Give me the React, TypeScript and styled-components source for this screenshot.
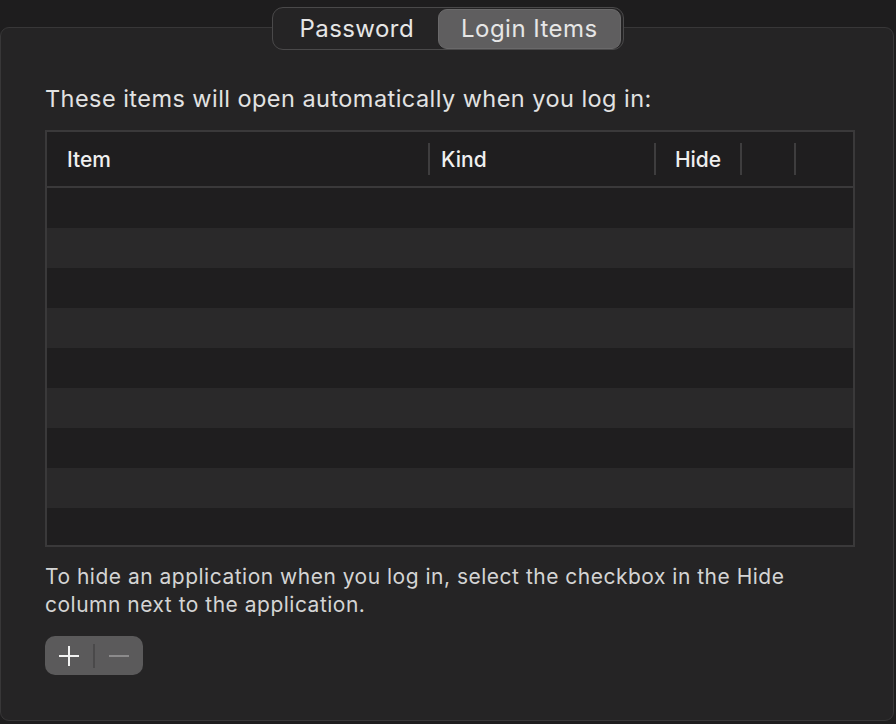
import React from "react";
import styled, { createGlobalStyle } from "styled-components";

const Global = createGlobalStyle`
  html, body { margin: 0; padding: 0; background: #1e1d1e; }
  body { font-family: Inter, "Liberation Sans", sans-serif; -webkit-font-smoothing: antialiased; }
  #root { width: 896px; height: 724px; overflow: hidden; }
`;

const Page = styled.div`
  width: 896px;
  height: 724px;
  padding-top: 7px;
  box-sizing: border-box;
  display: flex;
  flex-direction: column;
  align-items: center;
`;

const Segmented = styled.div`
  position: relative;
  z-index: 2;
  display: flex;
  align-items: center;
  height: 43px;
  box-sizing: border-box;
  padding: 0 2px;
  border: 1px solid #4a494a;
  border-radius: 11px;
  background: #252425;
`;

const Segment = styled.div<{ $active?: boolean }>`
  height: 40px;
  box-sizing: border-box;
  display: flex;
  align-items: center;
  justify-content: center;
  padding: 0 ${(p) => (p.$active ? "22px" : "24px")};
  border-radius: 9px;
  font-size: 24px;
  letter-spacing: 0.45px;
  color: #e6e6e6;
  background: ${(p) => (p.$active ? "#5f5e5f" : "transparent")};
  border: ${(p) => (p.$active ? "1px solid #6a696a" : "none")};
`;

const Panel = styled.div`
  margin-top: -23px;
  width: 894px;
  align-self: flex-start;
  height: 694px;
  box-sizing: border-box;
  border: 1.5px solid #383738;
  border-radius: 9px;
  background: #252425;
  padding: 56px 39px 0 44px;
  display: flex;
  flex-direction: column;
`;

const Lead = styled.div`
  font-size: 23.5px;
  letter-spacing: 0.45px;
  line-height: 30px;
  color: #e2e2e2;
  height: 30px;
  white-space: nowrap;
`;

const Table = styled.div`
  margin-top: 16px;
  width: 810px;
  height: 417px;
  box-sizing: border-box;
  border: 2px solid #3a393a;
  background: #1f1e1f;
  display: flex;
  flex-direction: column;
  overflow: hidden;
`;

const Header = styled.div`
  height: 56px;
  flex: none;
  box-sizing: border-box;
  border-bottom: 2px solid #3a393a;
  display: grid;
  grid-template-columns: 381px 226px 86px 54px 1fr;
  align-items: center;
`;

const HeadCell = styled.div<{ $first?: boolean; $center?: boolean }>`
  height: 32px;
  display: flex;
  align-items: center;
  justify-content: ${(p) => (p.$center ? "center" : "flex-start")};
  box-sizing: border-box;
  padding-left: ${(p) => (p.$first ? "20px" : p.$center ? "0" : "11px")};
  border-left: ${(p) => (p.$first ? "none" : "2px solid #3e3d3e")};
  font-size: 21px;
  font-weight: 500;
  color: #efefef;
`;

const Row = styled.div<{ $alt?: boolean }>`
  height: 40px;
  flex: none;
  background: ${(p) => (p.$alt ? "#2a292a" : "#1f1e1f")};
`;

const Note = styled.div`
  margin-top: 16px;
  font-size: 21px;
  letter-spacing: 0.5px;
  line-height: 28px;
  color: #d4d4d4;
  width: 810px;
`;

const ButtonGroup = styled.div`
  margin-top: 17px;
  width: 98px;
  height: 39px;
  border-radius: 10px;
  background: #5b5a5b;
  display: flex;
  align-items: center;
`;

const IconButton = styled.div`
  width: 49px;
  height: 39px;
  display: flex;
  align-items: center;
  justify-content: center;
`;

const Divider = styled.div`
  width: 1.5px;
  height: 24px;
  background: #4a494a;
`;

export default function App() {
  const rows = Array.from({ length: 9 }, (_, i) => i);
  return (
    <>
      <Global />
      <Page>
        <Segmented>
          <Segment>Password</Segment>
          <Segment $active>Login Items</Segment>
        </Segmented>
        <Panel>
          <Lead>These items will open automatically when you log in:</Lead>
          <Table>
            <Header>
              <HeadCell $first>Item</HeadCell>
              <HeadCell>Kind</HeadCell>
              <HeadCell $center>Hide</HeadCell>
              <HeadCell />
              <HeadCell />
            </Header>
            {rows.map((i) => (
              <Row key={i} $alt={i % 2 === 1} />
            ))}
          </Table>
          <Note>
            To hide an application when you log in, select the checkbox in the Hide column next to the
            application.
          </Note>
          <ButtonGroup>
            <IconButton>
              <svg width="22" height="22" viewBox="0 0 22 22">
                <path d="M11 1v20M1 11h20" stroke="#f2f2f2" strokeWidth="2" />
              </svg>
            </IconButton>
            <Divider />
            <IconButton>
              <svg width="22" height="22" viewBox="0 0 22 22">
                <path d="M1 11h20" stroke="#8c8b8c" strokeWidth="2" />
              </svg>
            </IconButton>
          </ButtonGroup>
        </Panel>
      </Page>
    </>
  );
}
